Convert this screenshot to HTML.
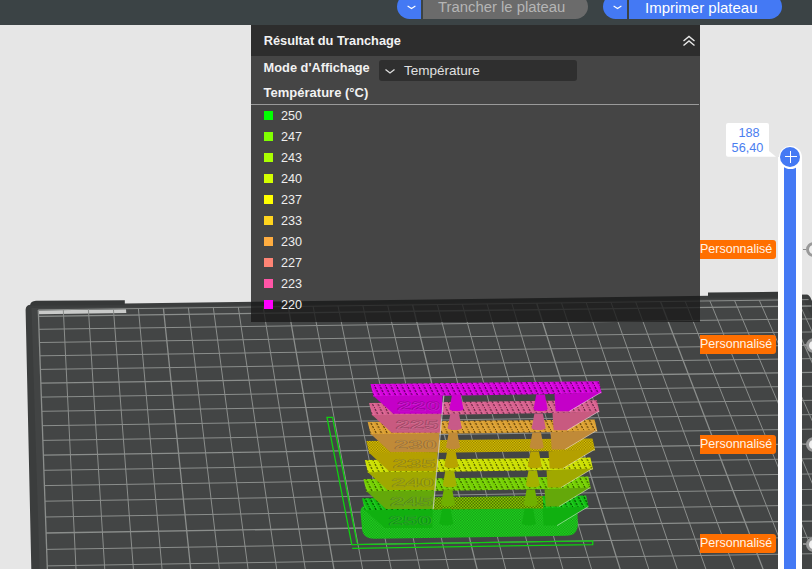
<!DOCTYPE html>
<html><head><meta charset="utf-8"><style>
*{margin:0;padding:0;box-sizing:border-box}
body{width:812px;height:569px;overflow:hidden;background:#e6e6e6;position:relative;font-family:"Liberation Sans",sans-serif}
.abs{position:absolute}
#bed{position:absolute;left:0;top:0}
#top{position:absolute;left:0;top:0;width:812px;height:25px;background:#3b4345}
.btn{position:absolute;top:-6px;height:25px;border-radius:12.5px;overflow:hidden}
.btn .l{position:absolute;left:0;top:0;height:25px;width:24px;background:#4479f4}
.btn .r{position:absolute;top:0;height:25px;right:0;color:#fff;font-size:15px;line-height:25px;padding-top:1px}
.chev{position:absolute;left:10px;top:11px;width:9px;height:5px}
#panel{position:absolute;left:251px;top:25px;width:449px;height:297px;background:rgba(25,25,25,0.79)}
#ph{position:absolute;left:0;top:0;width:449px;height:31px;background:#2d2d2d}
.t{position:absolute;color:#f2f2f2;white-space:nowrap}
.li{position:absolute;left:13px;height:12px}
.li i{position:absolute;left:0;top:0;width:9px;height:9px}
.li span{position:absolute;left:17px;top:-2px;font-size:12.6px;color:#eeeeee;line-height:14px}
.lab{position:absolute;left:700px;width:76px;height:19px;background:#ff6f00;border-radius:0 3px 3px 0;color:#fff3e6;font-size:12.5px;line-height:19.2px;overflow:hidden;white-space:nowrap}
.tick{position:absolute;left:803px;width:3px;height:1.5px;background:#8c8c8c}
.ring{position:absolute;left:806px;width:15px;height:15px;border-radius:50%;border:3.6px solid #999;background:#f0f0f0}
</style></head><body>
<svg id="bed" width="812" height="569" viewBox="0 0 812 569">
<path d="M25.6,309.8 Q25.8,304.8 31,304.8 L811.3,294.4 L1006.9,711.0 L34.8,728 Z" fill="#3b3d3d"/>
<polygon points="31.5,307.9 802.9,297.7 994.8,711.2 44.6,728.0" fill="#424444"/>
<polygon points="38.3,309.4 797.5,299.3 987.3,711.3 52.9,727.9" fill="#434545"/>
<polygon points="38.3,310.5 126.0,309.3 126.3,313.1 38.5,314.2" fill="#c9cac9"/>
<g stroke="#8b8e8c" transform="translate(0,0.5)"><line x1="38.3" y1="309.4" x2="52.9" y2="727.9" stroke-width="1.3"/><line x1="63.3" y1="309.0" x2="83.8" y2="727.3" stroke-width="1.0"/><line x1="88.4" y1="308.7" x2="114.7" y2="726.8" stroke-width="1.0"/><line x1="113.4" y1="308.4" x2="145.5" y2="726.2" stroke-width="1.0"/><line x1="138.4" y1="308.0" x2="176.3" y2="725.7" stroke-width="1.0"/><line x1="163.4" y1="307.7" x2="207.1" y2="725.1" stroke-width="1.3"/><line x1="188.4" y1="307.4" x2="237.9" y2="724.6" stroke-width="1.0"/><line x1="213.3" y1="307.0" x2="268.7" y2="724.0" stroke-width="1.0"/><line x1="238.3" y1="306.7" x2="299.4" y2="723.5" stroke-width="1.0"/><line x1="263.2" y1="306.4" x2="330.1" y2="723.0" stroke-width="1.0"/><line x1="288.2" y1="306.0" x2="360.8" y2="722.4" stroke-width="1.3"/><line x1="313.1" y1="305.7" x2="391.5" y2="721.9" stroke-width="1.0"/><line x1="338.0" y1="305.4" x2="422.2" y2="721.3" stroke-width="1.0"/><line x1="362.9" y1="305.1" x2="452.8" y2="720.8" stroke-width="1.0"/><line x1="387.7" y1="304.7" x2="483.4" y2="720.2" stroke-width="1.0"/><line x1="412.6" y1="304.4" x2="514.0" y2="719.7" stroke-width="1.3"/><line x1="437.4" y1="304.1" x2="544.6" y2="719.2" stroke-width="1.0"/><line x1="462.3" y1="303.7" x2="575.1" y2="718.6" stroke-width="1.0"/><line x1="487.1" y1="303.4" x2="605.7" y2="718.1" stroke-width="1.0"/><line x1="511.9" y1="303.1" x2="636.2" y2="717.5" stroke-width="1.0"/><line x1="536.7" y1="302.7" x2="666.7" y2="717.0" stroke-width="1.3"/><line x1="561.5" y1="302.4" x2="697.2" y2="716.4" stroke-width="1.0"/><line x1="586.2" y1="302.1" x2="727.6" y2="715.9" stroke-width="1.0"/><line x1="611.0" y1="301.8" x2="758.1" y2="715.4" stroke-width="1.0"/><line x1="635.7" y1="301.4" x2="788.5" y2="714.8" stroke-width="1.0"/><line x1="660.5" y1="301.1" x2="818.9" y2="714.3" stroke-width="1.3"/><line x1="685.2" y1="300.8" x2="849.3" y2="713.8" stroke-width="1.0"/><line x1="709.9" y1="300.4" x2="879.6" y2="713.2" stroke-width="1.0"/><line x1="734.6" y1="300.1" x2="910.0" y2="712.7" stroke-width="1.0"/><line x1="759.3" y1="299.8" x2="940.3" y2="712.1" stroke-width="1.0"/><line x1="783.9" y1="299.5" x2="970.6" y2="711.6" stroke-width="1.3"/><line x1="797.5" y1="299.3" x2="987.3" y2="711.3" stroke-width="1.0"/><line x1="38.3" y1="309.4" x2="808.6" y2="299.1" stroke-width="1.0"/><line x1="38.5" y1="315.8" x2="811.5" y2="305.5" stroke-width="1.3"/><line x1="39.0" y1="328.8" x2="817.5" y2="318.3" stroke-width="1.0"/><line x1="39.4" y1="342.0" x2="823.6" y2="331.3" stroke-width="1.0"/><line x1="39.9" y1="355.3" x2="829.7" y2="344.5" stroke-width="1.0"/><line x1="40.4" y1="368.9" x2="836.0" y2="357.8" stroke-width="1.0"/><line x1="40.9" y1="382.7" x2="842.3" y2="371.4" stroke-width="1.3"/><line x1="41.4" y1="396.6" x2="848.7" y2="385.2" stroke-width="1.0"/><line x1="41.8" y1="410.8" x2="855.3" y2="399.2" stroke-width="1.0"/><line x1="42.4" y1="425.2" x2="861.9" y2="413.4" stroke-width="1.0"/><line x1="42.9" y1="439.9" x2="868.6" y2="427.8" stroke-width="1.0"/><line x1="43.4" y1="454.7" x2="875.4" y2="442.4" stroke-width="1.3"/><line x1="43.9" y1="469.8" x2="882.4" y2="457.2" stroke-width="1.0"/><line x1="44.4" y1="485.1" x2="889.4" y2="472.3" stroke-width="1.0"/><line x1="45.0" y1="500.7" x2="896.6" y2="487.6" stroke-width="1.0"/><line x1="45.5" y1="516.5" x2="903.8" y2="503.2" stroke-width="1.0"/><line x1="46.1" y1="532.5" x2="911.2" y2="519.0" stroke-width="1.3"/><line x1="46.7" y1="548.9" x2="918.7" y2="535.1" stroke-width="1.0"/><line x1="47.2" y1="565.4" x2="926.3" y2="551.4" stroke-width="1.0"/><line x1="47.8" y1="582.3" x2="934.1" y2="568.0" stroke-width="1.0"/><line x1="48.4" y1="599.4" x2="942.0" y2="584.8" stroke-width="1.0"/><line x1="49.0" y1="616.9" x2="950.0" y2="602.0" stroke-width="1.3"/><line x1="49.7" y1="634.6" x2="958.1" y2="619.4" stroke-width="1.0"/><line x1="50.3" y1="652.6" x2="966.4" y2="637.1" stroke-width="1.0"/><line x1="50.9" y1="670.9" x2="974.8" y2="655.1" stroke-width="1.0"/><line x1="51.6" y1="689.6" x2="983.3" y2="673.5" stroke-width="1.0"/></g>
<path d="M36,300.8 L124.8,300.3 L124.8,305 L30,305.6 Q30.5,301 36,300.8Z" fill="#363838"/>
<polygon points="708,292.6 778,291.8 778,297.3 708,297.6" fill="#363838"/>
<defs><pattern id="h0" width="5.5" height="11" patternUnits="userSpaceOnUse"><rect width="5.5" height="11" fill="#d600de"/><path d="M-0.5,-1 L6,12" stroke="#3a003a" stroke-opacity="0.85" stroke-width="1.1" stroke-dasharray="2.2 1.2"/><path d="M1.3,-1 L7.8,12 M-4.2,-1 L2.3,12" stroke="rgba(255,255,255,0.15)" stroke-width="0.8"/></pattern><pattern id="h1" width="5.5" height="11" patternUnits="userSpaceOnUse"><rect width="5.5" height="11" fill="#d8608e"/><path d="M-0.5,-1 L6,12" stroke="#4a1830" stroke-opacity="0.85" stroke-width="1.1" stroke-dasharray="2.2 1.2"/><path d="M1.3,-1 L7.8,12 M-4.2,-1 L2.3,12" stroke="rgba(255,255,255,0.15)" stroke-width="0.8"/></pattern><pattern id="h2" width="5.5" height="11" patternUnits="userSpaceOnUse"><rect width="5.5" height="11" fill="#dca030"/><path d="M-0.5,-1 L6,12" stroke="#402800" stroke-opacity="0.85" stroke-width="1.1" stroke-dasharray="2.2 1.2"/><path d="M1.3,-1 L7.8,12 M-4.2,-1 L2.3,12" stroke="rgba(255,255,255,0.15)" stroke-width="0.8"/></pattern><pattern id="h3" width="5.5" height="11" patternUnits="userSpaceOnUse"><rect width="5.5" height="11" fill="#e0c800"/><path d="M-0.5,-1 L6,12" stroke="#383000" stroke-opacity="0.85" stroke-width="1.1" stroke-dasharray="2.2 1.2"/><path d="M1.3,-1 L7.8,12 M-4.2,-1 L2.3,12" stroke="rgba(255,255,255,0.15)" stroke-width="0.8"/></pattern><pattern id="h4" width="5.5" height="11" patternUnits="userSpaceOnUse"><rect width="5.5" height="11" fill="#cce000"/><path d="M-0.5,-1 L6,12" stroke="#303800" stroke-opacity="0.85" stroke-width="1.1" stroke-dasharray="2.2 1.2"/><path d="M1.3,-1 L7.8,12 M-4.2,-1 L2.3,12" stroke="rgba(255,255,255,0.15)" stroke-width="0.8"/></pattern><pattern id="h5" width="5.5" height="11" patternUnits="userSpaceOnUse"><rect width="5.5" height="11" fill="#74d000"/><path d="M-0.5,-1 L6,12" stroke="#203800" stroke-opacity="0.85" stroke-width="1.1" stroke-dasharray="2.2 1.2"/><path d="M1.3,-1 L7.8,12 M-4.2,-1 L2.3,12" stroke="rgba(255,255,255,0.15)" stroke-width="0.8"/></pattern><pattern id="h6" width="5.5" height="11" patternUnits="userSpaceOnUse"><rect width="5.5" height="11" fill="#10c010"/><path d="M-0.5,-1 L6,12" stroke="#003000" stroke-opacity="0.85" stroke-width="1.1" stroke-dasharray="2.2 1.2"/><path d="M1.3,-1 L7.8,12 M-4.2,-1 L2.3,12" stroke="rgba(255,255,255,0.15)" stroke-width="0.8"/></pattern><pattern id="hol" width="3" height="3" patternUnits="userSpaceOnUse"><rect width="3" height="3" fill="#86c400"/><rect x="0" y="0" width="1.5" height="1.5" fill="#2a4000" opacity="0.6"/><rect x="1.5" y="1.5" width="1.5" height="1.5" fill="#2a4000" opacity="0.6"/></pattern><pattern id="hgb" width="2.6" height="2.6" patternUnits="userSpaceOnUse"><rect width="2.6" height="2.6" fill="#22dc22"/><rect x="0" y="0" width="1.3" height="1.3" fill="#004000" opacity="0.45"/><rect x="1.3" y="1.3" width="1.3" height="1.3" fill="#004000" opacity="0.45"/></pattern><pattern id="h3c" width="2.6" height="2.6" patternUnits="userSpaceOnUse"><rect width="2.6" height="2.6" fill="#e4cc00"/><rect x="0" y="0" width="1.3" height="1.3" fill="#403000" opacity="0.55"/><rect x="1.3" y="1.3" width="1.3" height="1.3" fill="#403000" opacity="0.55"/></pattern></defs><path d="M368,505 L577.3,505 L577.8,524 Q577.8,535.8 566,535.8 L374,538.7 Q362,538.7 361.9,527 L360.5,512.2 Q360.5,505 368,505 Z" fill="url(#hgb)"/>
<polygon points="362.1,498.2 586.1,495.6 588.7,507.6 365.0,511.0" fill="url(#h6)"/>
<polygon points="432.7,497.4 542.5,496.1 543.5,508.4 432.7,509.6" fill="url(#hol)"/>
<polygon points="442.1,508.7 450.5,508.7 453.2,523.2 439.4,523.2" fill="#10b010"/>
<ellipse cx="446.3" cy="523.2" rx="7" ry="2.2" fill="#10b010"/>
<polygon points="524.6,508.7 533.1,508.7 535.7,523.2 522.0,523.2" fill="#10b010"/>
<ellipse cx="528.9" cy="523.2" rx="7" ry="2.2" fill="#10b010"/>
<polygon points="365.0,510.3 432.7,509.6 432.4,528.1 384.5,528.1" fill="#10b010"/>
<text x="388.6" y="524.7" font-size="13.5" font-weight="bold" fill="none" stroke="rgba(0,0,0,0.22)" stroke-width="0.7" font-family="Liberation Sans" textLength="43" lengthAdjust="spacingAndGlyphs">250</text>
<text x="389.3" y="525.4" font-size="13.5" font-weight="bold" fill="none" stroke="rgba(255,255,255,0.13)" stroke-width="0.6" font-family="Liberation Sans" textLength="43" lengthAdjust="spacingAndGlyphs">250</text>
<polygon points="542.5,508.4 588.4,506.5 557.0,525.6 543.7,525.6" fill="#10b010"/>
<line x1="588.4" y1="506.5" x2="557.0" y2="525.6" stroke="rgba(255,255,255,0.6)" stroke-width="0.8"/>
<polygon points="363.5,479.1 588.2,476.5 590.9,488.5 366.5,491.9" fill="url(#h5)"/>
<polygon points="443.8,489.6 452.2,489.6 454.9,504.1 441.1,504.1" fill="#70b000"/>
<ellipse cx="448.0" cy="504.1" rx="7" ry="2.2" fill="#70b000"/>
<polygon points="526.6,489.6 535.0,489.6 537.7,504.1 523.9,504.1" fill="#70b000"/>
<ellipse cx="530.8" cy="504.1" rx="7" ry="2.2" fill="#70b000"/>
<polygon points="366.5,491.2 434.3,490.5 434.0,509.0 385.9,509.0" fill="#64a80a"/>
<text x="390.0" y="505.6" font-size="13.5" font-weight="bold" fill="none" stroke="rgba(0,0,0,0.22)" stroke-width="0.7" font-family="Liberation Sans" textLength="43" lengthAdjust="spacingAndGlyphs">245</text>
<text x="390.7" y="506.3" font-size="13.5" font-weight="bold" fill="none" stroke="rgba(255,255,255,0.13)" stroke-width="0.6" font-family="Liberation Sans" textLength="43" lengthAdjust="spacingAndGlyphs">245</text>
<polygon points="544.5,489.3 590.5,487.4 559.0,506.5 545.7,506.5" fill="#64a80a"/>
<line x1="590.5" y1="487.4" x2="559.0" y2="506.5" stroke="rgba(255,255,255,0.6)" stroke-width="0.8"/>
<polygon points="364.9,460.1 590.4,457.5 593.1,469.5 367.9,472.9" fill="url(#h4)"/>
<polygon points="445.4,470.6 453.9,470.6 456.6,485.1 442.8,485.1" fill="#a4b000"/>
<ellipse cx="449.7" cy="485.1" rx="7" ry="2.2" fill="#a4b000"/>
<polygon points="528.5,470.6 537.0,470.6 539.7,485.1 525.9,485.1" fill="#a4b000"/>
<ellipse cx="532.8" cy="485.1" rx="7" ry="2.2" fill="#a4b000"/>
<polygon points="367.9,472.2 436.0,471.5 435.7,490.0 387.4,490.0" fill="#a0a800"/>
<text x="391.4" y="486.6" font-size="13.5" font-weight="bold" fill="none" stroke="rgba(0,0,0,0.22)" stroke-width="0.7" font-family="Liberation Sans" textLength="43" lengthAdjust="spacingAndGlyphs">240</text>
<text x="392.1" y="487.3" font-size="13.5" font-weight="bold" fill="none" stroke="rgba(255,255,255,0.13)" stroke-width="0.6" font-family="Liberation Sans" textLength="43" lengthAdjust="spacingAndGlyphs">240</text>
<polygon points="546.5,470.3 592.7,468.4 561.1,487.5 547.7,487.5" fill="#a0a800"/>
<line x1="592.7" y1="468.4" x2="561.1" y2="487.5" stroke="rgba(255,255,255,0.6)" stroke-width="0.8"/>
<polygon points="366.3,441.0 592.5,438.4 595.2,450.4 369.3,453.8" fill="url(#h3c)"/>
<polygon points="447.1,451.5 455.6,451.5 458.3,466.0 444.4,466.0" fill="#b8a400"/>
<ellipse cx="451.4" cy="466.0" rx="7" ry="2.2" fill="#b8a400"/>
<polygon points="530.5,451.5 539.0,451.5 541.7,466.0 527.8,466.0" fill="#b8a400"/>
<ellipse cx="534.7" cy="466.0" rx="7" ry="2.2" fill="#b8a400"/>
<polygon points="369.3,453.1 437.6,452.4 437.3,470.9 388.9,470.9" fill="#b4a000"/>
<text x="392.8" y="467.5" font-size="13.5" font-weight="bold" fill="none" stroke="rgba(0,0,0,0.22)" stroke-width="0.7" font-family="Liberation Sans" textLength="43" lengthAdjust="spacingAndGlyphs">235</text>
<text x="393.5" y="468.2" font-size="13.5" font-weight="bold" fill="none" stroke="rgba(255,255,255,0.13)" stroke-width="0.6" font-family="Liberation Sans" textLength="43" lengthAdjust="spacingAndGlyphs">235</text>
<polygon points="548.5,451.2 594.8,449.3 563.1,468.4 549.7,468.4" fill="#b4a000"/>
<line x1="594.8" y1="449.3" x2="563.1" y2="468.4" stroke="rgba(255,255,255,0.6)" stroke-width="0.8"/>
<polygon points="367.7,422.0 594.7,419.4 597.4,431.4 370.7,434.8" fill="url(#h2)"/>
<polygon points="448.8,432.5 457.3,432.5 460.0,447.0 446.1,447.0" fill="#c08a38"/>
<ellipse cx="453.0" cy="447.0" rx="7" ry="2.2" fill="#c08a38"/>
<polygon points="532.4,432.5 541.0,432.5 543.6,447.0 529.7,447.0" fill="#c08a38"/>
<ellipse cx="536.7" cy="447.0" rx="7" ry="2.2" fill="#c08a38"/>
<polygon points="370.7,434.1 439.2,433.4 438.9,451.9 390.4,451.9" fill="#c08a38"/>
<text x="394.2" y="448.5" font-size="13.5" font-weight="bold" fill="none" stroke="rgba(0,0,0,0.22)" stroke-width="0.7" font-family="Liberation Sans" textLength="43" lengthAdjust="spacingAndGlyphs">230</text>
<text x="394.9" y="449.2" font-size="13.5" font-weight="bold" fill="none" stroke="rgba(255,255,255,0.13)" stroke-width="0.6" font-family="Liberation Sans" textLength="43" lengthAdjust="spacingAndGlyphs">230</text>
<polygon points="550.5,432.2 597.0,430.3 565.2,449.4 551.7,449.4" fill="#c08a38"/>
<line x1="597.0" y1="430.3" x2="565.2" y2="449.4" stroke="rgba(255,255,255,0.6)" stroke-width="0.8"/>
<polygon points="369.1,402.9 596.9,400.3 599.5,412.3 372.1,415.8" fill="url(#h1)"/>
<polygon points="450.4,413.4 459.0,413.4 461.7,427.9 447.7,427.9" fill="#c85a88"/>
<ellipse cx="454.7" cy="427.9" rx="7" ry="2.2" fill="#c85a88"/>
<polygon points="534.4,413.4 542.9,413.4 545.6,427.9 531.7,427.9" fill="#c85a88"/>
<ellipse cx="538.6" cy="427.9" rx="7" ry="2.2" fill="#c85a88"/>
<polygon points="372.1,415.1 440.9,414.3 440.6,432.8 391.8,432.8" fill="#c85a80"/>
<text x="395.6" y="429.4" font-size="13.5" font-weight="bold" fill="none" stroke="rgba(0,0,0,0.22)" stroke-width="0.7" font-family="Liberation Sans" textLength="43" lengthAdjust="spacingAndGlyphs">225</text>
<text x="396.3" y="430.1" font-size="13.5" font-weight="bold" fill="none" stroke="rgba(255,255,255,0.13)" stroke-width="0.6" font-family="Liberation Sans" textLength="43" lengthAdjust="spacingAndGlyphs">225</text>
<polygon points="552.5,413.1 599.1,411.2 567.2,430.3 553.7,430.3" fill="#c85a80"/>
<line x1="599.1" y1="411.2" x2="567.2" y2="430.3" stroke="rgba(255,255,255,0.6)" stroke-width="0.8"/>
<polygon points="370.5,383.9 599.0,381.3 601.7,393.3 373.5,396.7" fill="url(#h0)"/>
<polygon points="452.1,394.4 460.7,394.4 463.4,408.9 449.4,408.9" fill="#cc00cc"/>
<ellipse cx="456.4" cy="408.9" rx="7" ry="2.2" fill="#cc00cc"/>
<polygon points="536.3,394.4 544.9,394.4 547.6,408.9 533.6,408.9" fill="#cc00cc"/>
<ellipse cx="540.6" cy="408.9" rx="7" ry="2.2" fill="#cc00cc"/>
<polygon points="373.5,396.0 442.5,395.3 442.2,413.8 393.3,413.8" fill="#c400c8"/>
<text x="397.0" y="410.4" font-size="13.5" font-weight="bold" fill="none" stroke="rgba(0,0,0,0.22)" stroke-width="0.7" font-family="Liberation Sans" textLength="43" lengthAdjust="spacingAndGlyphs">220</text>
<text x="397.7" y="411.1" font-size="13.5" font-weight="bold" fill="none" stroke="rgba(255,255,255,0.13)" stroke-width="0.6" font-family="Liberation Sans" textLength="43" lengthAdjust="spacingAndGlyphs">220</text>
<polygon points="554.5,394.1 601.3,392.2 569.3,411.3 555.7,411.3" fill="#c400c8"/>
<line x1="601.3" y1="392.2" x2="569.3" y2="411.3" stroke="rgba(255,255,255,0.6)" stroke-width="0.8"/>
<path d="M443.8,395.5 L433.2,509" stroke="#d8d8d8" stroke-width="1.2" opacity="0.7"/>
<path d="M351.8,544.6 L327,417.4 L332.6,417.4 L357,542.7 M351.8,544.6 L592.7,540.9 L592.7,544.6 L352.2,548.3" fill="none" stroke="#10d010" stroke-width="1.3"/>
<path d="M800,292.6 Q811,292.5 812.5,303.5 L813,280 L800,280 Z" fill="#e6e6e6"/>
</svg>
<div id="top">
 <div class="btn" style="left:397px;width:191px">
  <div class="l"></div>
  <div class="r" style="left:26px;background:#6b6b6b;color:#b5b5b5;padding-left:15px;font-size:14.85px">Trancher le plateau</div>
  <svg class="chev" viewBox="0 0 9 5"><path d="M0.6 1.1 L4.5 3.6 L8.4 1.1" stroke="#fff" stroke-width="1.15" fill="none"/></svg>
 </div>
 <div class="btn" style="left:603px;width:179px">
  <div class="l"></div>
  <div class="r" style="left:26px;background:#4479f4;padding-left:16px">Imprimer plateau</div>
  <svg class="chev" viewBox="0 0 9 5"><path d="M0.6 1.1 L4.5 3.6 L8.4 1.1" stroke="#fff" stroke-width="1.15" fill="none"/></svg>
 </div>
</div>
<div id="panel">
 <div id="ph"></div>
 <div class="t" style="left:12.7px;top:8px;font-size:12.8px;font-weight:bold">Résultat du Tranchage</div>
 <svg class="abs" style="left:431px;top:10px" width="14" height="12" viewBox="0 0 14 12"><path d="M1.5 6 L7 1.5 L12.5 6 M1.5 10.5 L7 6 L12.5 10.5" stroke="#e8e8e8" stroke-width="1.4" fill="none"/></svg>
 <div class="t" style="left:12.6px;top:35px;font-size:12.8px;font-weight:bold">Mode d'Affichage</div>
 <div class="abs" style="left:128px;top:35px;width:198px;height:21px;background:#2f2f2f;border-radius:3px"></div>
 <svg class="abs" style="left:134px;top:44px" width="10" height="5" viewBox="0 0 10 5"><path d="M0.5 0.5 L5 4 L9.5 0.5" stroke="#ddd" stroke-width="1.3" fill="none"/></svg>
 <div class="t" style="left:153px;top:38px;font-size:13.5px;color:#e0e0e0">Température</div>
 <div class="t" style="left:12.6px;top:60px;font-size:13px;font-weight:bold">Température (°C)</div>
 <div class="abs" style="left:0;top:79px;width:448px;height:1px;background:#9a9a9a"></div>
 <div class="li" style="top:86px"><i style="background:#00ff00"></i><span>250</span></div><div class="li" style="top:107px"><i style="background:#80ff00"></i><span>247</span></div><div class="li" style="top:128px"><i style="background:#aaff00"></i><span>243</span></div><div class="li" style="top:149px"><i style="background:#d4ff00"></i><span>240</span></div><div class="li" style="top:170px"><i style="background:#ffff00"></i><span>237</span></div><div class="li" style="top:191px"><i style="background:#ffd41e"></i><span>233</span></div><div class="li" style="top:212px"><i style="background:#ffad40"></i><span>230</span></div><div class="li" style="top:233px"><i style="background:#ff8475"></i><span>227</span></div><div class="li" style="top:254px"><i style="background:#ff55a6"></i><span>223</span></div><div class="li" style="top:275px"><i style="background:#ff00ff"></i><span>220</span></div>
</div>
<div class="abs" style="left:778px;top:157px;width:24px;height:420px;background:#fff"></div>
<div class="abs" style="left:784px;top:160px;width:12px;height:420px;background:#4479f4"></div>
<div class="abs" style="left:778.5px;top:145.5px;width:23px;height:23px;border-radius:50%;background:#fff"></div>
<div class="abs" style="left:780px;top:147px;width:20px;height:20px;border-radius:50%;background:#4479f4"></div>
<div class="abs" style="left:784.5px;top:156.3px;width:12px;height:1.2px;background:#fff"></div>
<div class="abs" style="left:789.9px;top:151px;width:1.2px;height:12px;background:#fff"></div>
<svg class="abs" style="left:725px;top:122px" width="53" height="36" viewBox="0 0 53 36"><path d="M3 1 H42 Q44 1 44 3 V29 L51 34.7 H3 Q1 34.7 1 32.7 V3 Q1 1 3 1 Z" fill="#fff"/></svg>
<div class="t" style="left:738.5px;top:125.6px;font-size:12.7px;color:#4a7ef0">188</div>
<div class="t" style="left:731.6px;top:140.8px;font-size:12.7px;color:#4a7ef0">56,40</div>
<div class="lab" style="top:239.5px">Personnalisé</div>
<div class="tick" style="top:248.5px"></div><div class="ring" style="top:242.0px"></div>
<div class="lab" style="top:335.2px">Personnalisé</div>
<div class="tick" style="top:344.2px"></div><div class="ring" style="top:337.7px"></div>
<div class="lab" style="top:434.6px">Personnalisé</div>
<div class="tick" style="top:443.6px"></div><div class="ring" style="top:437.1px"></div>
<div class="lab" style="top:534.3px">Personnalisé</div>
<div class="tick" style="top:543.3px"></div><div class="ring" style="top:536.8px"></div>
</body></html>
